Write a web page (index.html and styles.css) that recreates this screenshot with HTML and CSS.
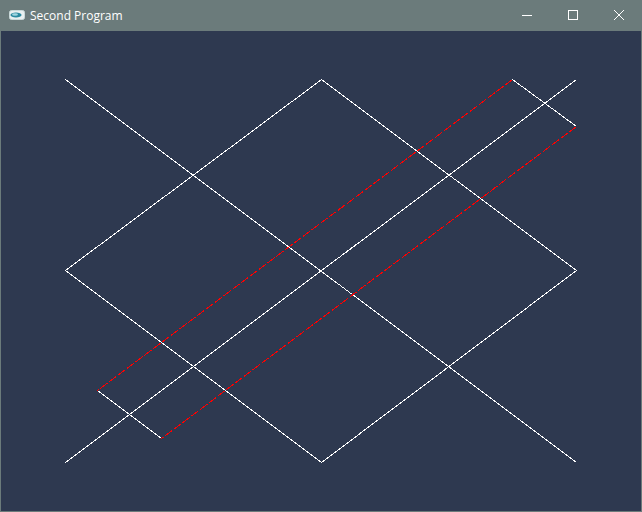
FILE: index.html
```html
<!DOCTYPE html>
<html>
<head>
<meta charset="utf-8">
<title>Second Program</title>
<link rel="stylesheet" href="styles.css">
</head>
<body>
<div class="window">
  <div class="titlebar">
    <div class="title-left">
      <svg class="app-icon" width="16" height="10" viewBox="0 0 16 10">
        <rect x="0.5" y="0.5" width="15" height="9" rx="2" fill="#e8f0f0" stroke="#c8d8d8"/>
        <ellipse cx="7" cy="5" rx="5.5" ry="2.6" fill="#2a8aa0"/>
        <ellipse cx="6" cy="4.5" rx="3" ry="1.2" fill="#9fd6e0"/>
      </svg>
      <span class="title">Second Program</span>
    </div>
    <div class="controls">
      <div class="btn">
        <svg width="10" height="10" viewBox="0 0 10 10"><path d="M0 5.5H10" stroke="#fff" stroke-width="1"/></svg>
      </div>
      <div class="btn">
        <svg width="10" height="10" viewBox="0 0 10 10"><rect x="0.5" y="0.5" width="9" height="9" fill="none" stroke="#fff" stroke-width="1"/></svg>
      </div>
      <div class="btn">
        <svg width="10" height="10" viewBox="0 0 10 10"><path d="M0 0L10 10M10 0L0 10" stroke="#fff" stroke-width="1"/></svg>
      </div>
    </div>
  </div>
  <div class="client">
    <svg class="canvas" width="640" height="480" viewBox="0 0 640 480" shape-rendering="crispEdges">
      <g stroke="#ffffff" stroke-width="1" fill="none">
        <line x1="64.5" y1="48.5" x2="575.5" y2="431.5"/>
        <line x1="575.5" y1="48.5" x2="64.5" y2="431.5"/>
        <polygon points="320.5,48.5 575.5,239.5 320.5,431.5 64.5,239.5"/>
        <line x1="511.5" y1="48.5" x2="575.5" y2="95.5"/>
        <line x1="96.5" y1="359.5" x2="160.5" y2="407.5"/>
      </g>
      <g stroke="#ff0000" stroke-width="1" fill="none" stroke-dasharray="9 2">
        <line x1="511.5" y1="48.5" x2="96.5" y2="359.5"/>
        <line x1="575.5" y1="95.5" x2="160.5" y2="407.5"/>
      </g>
    </svg>
  </div>
</div>
</body>
</html>
```
FILE: styles.css
```css
html, body {
  margin: 0;
  padding: 0;
  background: #6b7b7b;
}
.window {
  width: 642px;
  height: 512px;
  display: flex;
  flex-direction: column;
  background: #6b7b7b;
}
.titlebar {
  height: 31px;
  display: flex;
  align-items: center;
  justify-content: space-between;
  background: #6b7b7b;
  color: #ffffff;
  font-family: "Open Sans", "Noto Sans", "DejaVu Sans", sans-serif;
  font-size: 12px;
}
.title-left {
  display: flex;
  align-items: center;
  padding-left: 9px;
  gap: 5px;
  height: 31px;
}
.app-icon {
  display: block;
  margin-top: -1px;
}
.title {
  line-height: 31px;
  margin-top: -1px;
}
.controls {
  display: flex;
  height: 31px;
}
.btn {
  width: 46px;
  height: 31px;
  display: flex;
  align-items: center;
  justify-content: center;
}
.btn svg {
  display: block;
  margin-top: -1px;
}
.client {
  flex: 1;
  padding: 0 1px 1px 1px;
  background: #6b7b7b;
  display: flex;
}
.canvas {
  display: block;
  background: #2e3950;
}
```
